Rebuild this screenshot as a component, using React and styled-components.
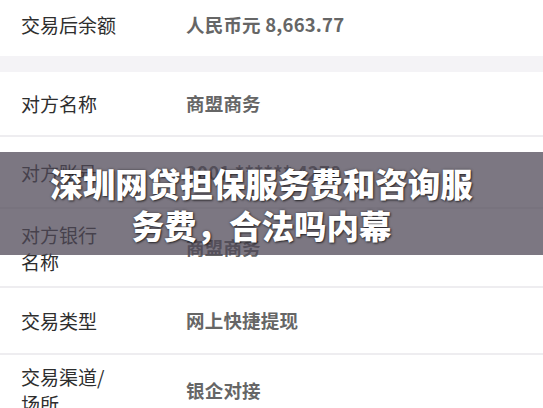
import React from 'react';
import styled, { createGlobalStyle } from 'styled-components';

const GlobalStyle = createGlobalStyle`
  html, body {
    margin: 0;
    padding: 0;
    background: #fff;
    overflow: hidden;
  }
  body {
    font-family: "Noto Sans CJK SC", "Noto Sans", sans-serif;
  }
`;

const Page = styled.div`
  position: relative;
  width: 543px;
  height: 408px;
  overflow: hidden;
  background: #fff;
`;

const List = styled.div`
  display: flex;
  flex-direction: column;
  margin-top: -8px;
`;

const Row = styled.div`
  display: flex;
  align-items: center;
  height: ${(p) => p.$h}px;
  flex-shrink: 0;
  padding: 0 21px;
  box-sizing: border-box;
  border-bottom: ${(p) => (p.$line ? '2px solid #eeedf0' : 'none')};
`;

const Gap = styled.div`
  height: 16px;
  flex-shrink: 0;
  background: #f4f3f6;
`;

const Label = styled.div`
  width: 165px;
  flex-shrink: 0;
  font-size: 19px;
  line-height: 27px;
  color: #2e2e2e;
  white-space: pre-line;
`;

const Value = styled.div`
  font-size: 18.5px;
  line-height: 27px;
  font-weight: 700;
  color: #666;
  letter-spacing: 0.2px;
`;

const Banner = styled.div`
  position: absolute;
  left: 0;
  right: 0;
  top: 152px;
  height: 103px;
  display: flex;
  align-items: center;
  justify-content: center;
  padding: 0 20px 0 0;
  box-sizing: border-box;
  background: rgba(78, 72, 86, 0.74);
`;

const Title = styled.h1`
  margin: 0;
  width: 440px;
  text-align: center;
  font-size: 32.5px;
  line-height: 42px;
  font-weight: 900;
  color: #fff;
  text-shadow: 1px 1px 2px rgba(0, 0, 0, 0.6), 0 0 3px rgba(0, 0, 0, 0.4);
`;

const rows = [
  { label: '交易后余额', value: '人民币元 8,663.77', h: 64, gap: true },
  { label: '对方名称', value: '商盟商务', h: 65, line: true },
  { label: '对方账号', value: '2001 ****** 4278', h: 72, line: true },
  { label: '对方银行\n名称', value: '商盟商务', h: 79, line: true },
  { label: '交易类型', value: '网上快捷提现', h: 67, line: true },
  { label: '交易渠道/\n场所', value: '银企对接', h: 70 },
];

export default function App() {
  return (
    <Page>
      <GlobalStyle />
      <List>
        {rows.map((r) => (
          <React.Fragment key={r.label}>
            <Row $h={r.h} $line={r.line}>
              <Label>{r.label}</Label>
              <Value>{r.value}</Value>
            </Row>
            {r.gap && <Gap />}
          </React.Fragment>
        ))}
      </List>
      <Banner>
        <Title>深圳网贷担保服务费和咨询服务费，合法吗内幕</Title>
      </Banner>
    </Page>
  );
}
